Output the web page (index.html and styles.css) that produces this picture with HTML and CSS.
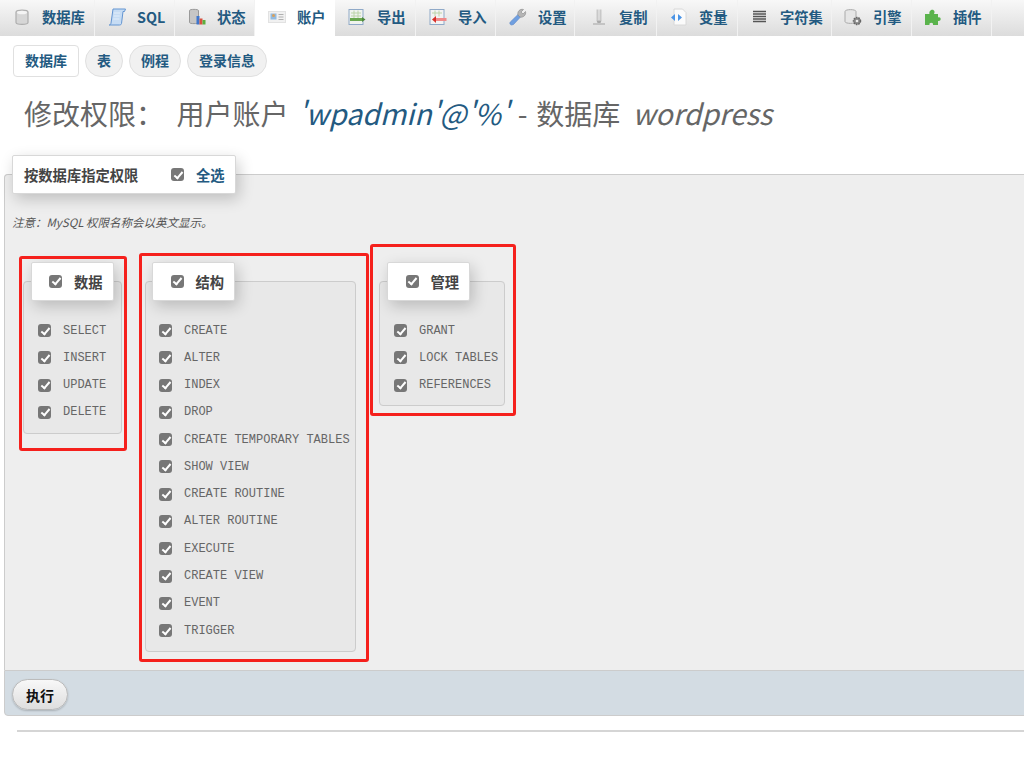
FILE: index.html
```html
<!DOCTYPE html>
<html lang="zh-CN">
<head>
  <meta charset="UTF-8" />
  <title>修改权限</title>
  <link rel="stylesheet" href="styles.css">
</head>
<body>
  <nav class="topmenu">
    <a class="tab tab-db" href="#"><svg class="ico" viewBox="0 0 18 18"><path d="M3 4c0-2.500 12-2.500 12 0v10.500c0 2.500-12 2.500-12 0z" fill="#d6d6d6" stroke="#adadad" stroke-width="1.200"/><ellipse cx="9" cy="4.500" rx="5" ry="1.800" fill="#f4f4f4"/></svg>数据库</a>
    <a class="tab tab-sql" href="#"><svg class="ico" viewBox="0 0 18 18"><path d="M5 1h12.500l-1 2.500H15l-1.500 12c-.2 1-1 1.500-2 1.500H1.200c1 0 1.600-.8 1.800-1.800z" fill="#c6dcf4" stroke="#6395d2"/><path d="M6 5h6M5.700 8h6M5.300 11h6" stroke="#e2eefa"/></svg>SQL</a>
    <a class="tab tab-status" href="#"><svg class="ico" viewBox="0 0 18 18"><path d="M1.500 2.500c0-1.500 9-1.500 9 0v12c0 1.500-9 1.500-9 0z" fill="#c6c6c6" stroke="#999"/><rect x="8.500" y="8" width="3" height="8.500" fill="#3f76cc"/><rect x="11.500" y="10.500" width="3" height="6" fill="#d8503f"/><rect x="14.500" y="12" width="3" height="4.500" fill="#5cae3e"/></svg>状态</a>
    <a class="tab tab-active tab-account" href="#"><svg class="ico" viewBox="0 0 18 18"><rect x=".5" y="3.500" width="17" height="11" fill="#f1f1f1" stroke="#e2e2e2"/><rect x="2.500" y="5.500" width="6" height="6" fill="#94bbe0"/><circle cx="5.500" cy="7.500" r="1.500" fill="#d9a05b"/><path d="M10.500 6.500h5M10.500 9h5M10.500 11.500h5" stroke="#b0b0b0"/></svg>账户</a>
    <a class="tab tab-export" href="#"><svg class="ico" viewBox="0 0 18 18"><rect x="1" y="1.500" width="14" height="15" fill="#f0f3ee" stroke="#8fa9c8"/><path d="M3 5h10M3 8h10M6 2.500v8M10 2.500v8" stroke="#bcd4a8"/><rect x="2" y="10" width="12" height="3" fill="#6aa84f"/><path d="M14 9l3.500 2.500L14 14z" fill="#4f8a3c"/></svg>导出</a>
    <a class="tab tab-import" href="#"><svg class="ico" viewBox="0 0 18 18"><rect x="1" y="1.500" width="14" height="15" fill="#f3f3f3" stroke="#8fa9c8"/><path d="M3 5h10M6 2.500v6M10 2.500v6" stroke="#bcd4a8"/><rect x="5.500" y="10" width="12" height="3" fill="#f08a8a"/><path d="M7 8l-4 3.500L7 15z" fill="#d8302a"/></svg>导入</a>
    <a class="tab tab-settings" href="#"><svg class="ico" viewBox="0 0 18 18"><path d="M2.500 17a1.800 1.800 0 0 1-1.200-3L9 6.500 11.500 9l-7 7.500z" fill="#6f9fe0" stroke="#5a85c4" stroke-width=".6"/><path d="M9 7C8 3.500 11 .5 14.500 1.500L12 4l2 2 2.500-2.500C17.500 7 14 10 11 9z" fill="#b5b5b5" stroke="#888" stroke-width=".6"/></svg>设置</a>
    <a class="tab tab-copy" href="#"><svg class="ico" viewBox="0 0 18 18"><path d="M6.500 1.500h2v11h-2zM9.500 1.500h2v11h-2z" fill="#c8c8c8"/><path d="M6.500 12.500h5l-1 2.500h-3z" fill="#aaa"/><path d="M3 16h12" stroke="#b8b8b8" stroke-width="1.500"/></svg>复制</a>
    <a class="tab tab-vars" href="#"><svg class="ico" viewBox="0 0 18 18"><path d="M4 1h8.500L16 4.500V17H4z" fill="#fbfbfb" stroke="#d8d8d8"/><path d="M1 9.500l4-3.500v7zM12 9.500L8 6v7z" fill="#4a94e6"/></svg>变量</a>
    <a class="tab tab-charset" href="#"><svg class="ico" viewBox="0 0 18 18"><path d="M2 3.500h13M2 6h13M2 8.500h13M2 11h13M2 13.500h13" stroke="#555" stroke-width="1.400"/></svg>字符集</a>
    <a class="tab tab-engine" href="#"><svg class="ico" viewBox="0 0 18 18"><path d="M1 3.500c0-2.500 11-2.500 11 0v10c0 2.500-11 2.500-11 0z" fill="#e6e6e6" stroke="#aaa"/><circle cx="13" cy="13" r="3.500" fill="#8a8a8a" stroke="#666" stroke-width="1.500" stroke-dasharray="1.500 1"/><circle cx="13" cy="13" r="1.300" fill="#eee"/></svg>引擎</a>
    <a class="tab tab-plugin" href="#"><svg class="ico" viewBox="0 0 18 18"><path d="M1 6h4.500C4.500 2 9.500 0 10.500 3.500c.2 1-.3 1.800-.5 2.500h4v3.500c3-1.500 4 3.500.5 3.500H14v4H9c1-3-4.500-3-3.500 0H1z" fill="#5ab34c"/></svg>插件</a>
  </nav>

  <nav class="subtabs">
    <a class="pill pill-active" href="#">数据库</a>
    <a class="pill" href="#">表</a>
    <a class="pill" href="#">例程</a>
    <a class="pill" href="#">登录信息</a>
  </nav>

  <h2 class="title">修改权限：&nbsp;&nbsp;用户账户 <i class="user">'wpadmin'@'%'</i><span class="dash"> - </span>数据库 <i class="db-name">wordpress</i></h2>

  <form class="privs">
    <fieldset class="main">
      <legend class="card card-main">
        <span class="card-label">按数据库指定权限</span>
        <label class="check-all"><span class="cb"></span>全选</label>
      </legend>
      <p class="note">注意：MySQL 权限名称会以英文显示。</p>

      <div class="groups">
        <fieldset class="group group-data">
          <legend class="card card-group"><span class="cb"></span>数据</legend>
          <div class="row"><span class="cb"></span><code>SELECT</code></div>
          <div class="row"><span class="cb"></span><code>INSERT</code></div>
          <div class="row"><span class="cb"></span><code>UPDATE</code></div>
          <div class="row"><span class="cb"></span><code>DELETE</code></div>
        </fieldset>

        <fieldset class="group group-struct">
          <legend class="card card-group"><span class="cb"></span>结构</legend>
          <div class="row"><span class="cb"></span><code>CREATE</code></div>
          <div class="row"><span class="cb"></span><code>ALTER</code></div>
          <div class="row"><span class="cb"></span><code>INDEX</code></div>
          <div class="row"><span class="cb"></span><code>DROP</code></div>
          <div class="row"><span class="cb"></span><code>CREATE TEMPORARY TABLES</code></div>
          <div class="row"><span class="cb"></span><code>SHOW VIEW</code></div>
          <div class="row"><span class="cb"></span><code>CREATE ROUTINE</code></div>
          <div class="row"><span class="cb"></span><code>ALTER ROUTINE</code></div>
          <div class="row"><span class="cb"></span><code>EXECUTE</code></div>
          <div class="row"><span class="cb"></span><code>CREATE VIEW</code></div>
          <div class="row"><span class="cb"></span><code>EVENT</code></div>
          <div class="row"><span class="cb"></span><code>TRIGGER</code></div>
        </fieldset>

        <fieldset class="group group-admin">
          <legend class="card card-group"><span class="cb"></span>管理</legend>
          <div class="row"><span class="cb"></span><code>GRANT</code></div>
          <div class="row"><span class="cb"></span><code>LOCK TABLES</code></div>
          <div class="row"><span class="cb"></span><code>REFERENCES</code></div>
        </fieldset>
      </div>

      <div class="mark mark-data"></div>
      <div class="mark mark-struct"></div>
      <div class="mark mark-admin"></div>
    </fieldset>

    <div class="footer">
      <button class="go" type="button">执行</button>
    </div>
  </form>

  <hr class="rule">
</body>
</html>
```

FILE: styles.css
```css
/* General */
html, body {
  overflow: hidden;
}

body {
  margin: 0;
  width: 1024px;
  height: 771px;
  background: #fff;
  color: #444;
  font-family: "Noto Sans CJK SC", "Noto Sans", sans-serif;
  font-size: 14px;
}

a {
  text-decoration: none;
  color: #235a81;
}

/* Top menu */
.topmenu {
  display: flex;
  height: 36px;
  background: linear-gradient(#f8f8f8, #dcdcdc);
}

.tab {
  display: flex;
  align-items: center;
  box-sizing: border-box;
  width: 80px;
  padding: 0 0 4px 13px;
  border-right: 1px solid #f2f2f2;
  font-size: 14.300px;
  font-weight: 700;
  white-space: nowrap;
}

.tab-db { width: 95px; }
.tab-active { background: #fff; border-right: 0; }
.tab-export { width: 81px; }
.tab-settings { width: 79px; }
.tab-copy { width: 82px; padding-left: 15px; }
.tab-vars { width: 81px; }
.tab-charset { width: 94px; }
.tab-engine, .tab-plugin { padding-left: 12px; }

.ico {
  flex: none;
  width: 18px;
  height: 18px;
  margin: 2px 11px 0 0;
}

/* Sub tabs */
.subtabs {
  display: flex;
  gap: 6px;
  padding: 9px 0 0 13px;
}

.pill {
  box-sizing: border-box;
  height: 32px;
  padding: 0 11px;
  border: 1px solid #e0e0e0;
  border-radius: 16px;
  background: #f1f1f1;
  font-weight: 700;
  line-height: 29px;
}

.pill-active {
  border-radius: 4px;
  background: #fff;
}

/* Heading */
.title {
  margin: 0;
  padding: 16px 0 0 24px;
  height: 61px;
  box-sizing: border-box;
  color: #666;
  font-size: 28px;
  font-weight: 400;
  line-height: 40px;
  white-space: nowrap;
}

.title i {
  font-size: 28.600px;
}

.dash {
  margin: 0 2.500px;
}

.user {
  margin-left: 3px;
  color: #235a81;
}

.db-name {
  margin-left: 6px;
}

/* Privileges form */
.privs {
  width: 1040px;
  margin: 17px 0 0 4px;
}

.main {
  position: relative;
  box-sizing: border-box;
  height: 515px;
  min-width: 0;
  margin: 0;
  padding: 0 0 0 7px;
  border: 1px solid #ccc;
  border-bottom: 0;
  border-radius: 4px 4px 0 0;
  background: #eee;
}

.card {
  display: flex;
  align-items: center;
  box-sizing: border-box;
  height: 39px;
  padding: 0;
  border: 1px solid #d8d8d8;
  border-radius: 2px;
  background: #fff;
  box-shadow: 3px 5px 15px rgba(0, 0, 0, .2);
  color: #444;
  font-size: 14.300px;
  font-weight: 700;
}

.card-main {
  width: 224px;
  padding-left: 11px;
}

.card-label {
  width: 147px;
}

.check-all {
  display: flex;
  align-items: center;
  color: #235a81;
}

.check-all .cb {
  margin-right: 12px;
}

.note {
  margin: 0;
  padding-top: 18px;
  color: #555;
  font-size: 11.500px;
  font-style: italic;
  line-height: 20px;
}

.groups {
  display: flex;
  align-items: flex-start;
  margin-top: 30px;
}

.group {
  box-sizing: border-box;
  min-width: 0;
  margin: 0;
  padding: 0 0 0 14px;
  border: 1px solid #ccc;
  border-radius: 4px;
  background: #e8e8e8;
}

.group-data { width: 99px; height: 172px; margin-left: 11px; }
.group-struct { width: 211px; height: 390px; margin-left: 23px; padding-left: 13px; }
.group-admin { width: 126px; height: 144px; margin-left: 23px; }

.card-group {
  width: 83px;
  margin-left: -7px;
  padding: 0 0 1px 17.500px;
}

.card-group .cb {
  margin-right: 12px;
}

.group-data .card-group { margin-left: -7.500px; }

.row {
  display: flex;
  align-items: center;
  height: 27.270px;
}

.group .row:first-of-type {
  margin-top: 16px;
}

.row code {
  color: #666;
  font-family: "Liberation Mono", monospace;
  font-size: 12px;
  white-space: pre;
}

.row .cb {
  margin-right: 12px;
}

/* Checkbox drawn in CSS */
.cb {
  position: relative;
  flex: none;
  width: 13px;
  height: 13px;
  border-radius: 3px;
  background: #777;
}

.cb::after {
  content: "";
  position: absolute;
  left: 4.500px;
  top: 1.500px;
  width: 3px;
  height: 7px;
  border: solid #fff;
  border-width: 0 2px 2px 0;
  transform: rotate(40deg);
}

/* Red annotation frames */
.mark {
  position: absolute;
  box-sizing: border-box;
  border: 3px solid #f5201c;
  border-radius: 3px;
}

.mark-data { left: 14px; top: 62px; width: 108px; height: 195px; }
.mark-struct { left: 134px; top: 59px; width: 230px; height: 409px; }
.mark-admin { left: 365px; top: 50px; width: 146px; height: 172px; }

/* Footer */
.footer {
  box-sizing: border-box;
  height: 46px;
  padding: 8px 0 0 7px;
  border: 1px solid #ccc;
  border-radius: 0 0 4px 4px;
  background: #d3dce3;
}

.go {
  display: block;
  width: 56px;
  height: 31px;
  padding: 0;
  border: 1px solid #bbb;
  border-radius: 16px;
  background: linear-gradient(#f8f8f8, #dedede);
  box-shadow: 0 1px 2px rgba(0, 0, 0, .2);
  color: #111;
  font-family: inherit;
  font-size: 14px;
  font-weight: 700;
}

.rule {
  height: 2px;
  margin: 14px 0 0 17px;
  border: 0;
  background: #d5d5d5;
}
```
